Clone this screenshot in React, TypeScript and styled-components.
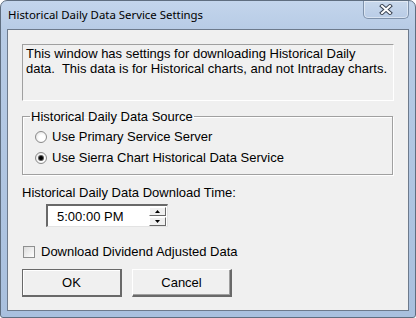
import React from 'react'
import styled, { createGlobalStyle } from 'styled-components'

const GlobalStyle = createGlobalStyle`
    html, body {
        margin: 0;
        padding: 0;
        background: #ffffff;
    }
`

export default function App() {
    return (
        <>
            <GlobalStyle />
            <Window>
                <TitleBar>
                    <Title>Historical Daily Data Service Settings</Title>
                    <CloseButton>
                        <svg width="14" height="11" viewBox="0 0 14 11">
                            <path d="M3 2 L11 9 M11 2 L3 9" stroke="#3c4656" strokeWidth="4" strokeLinecap="square" />
                            <path d="M3 2 L11 9 M11 2 L3 9" stroke="#ffffff" strokeWidth="2" strokeLinecap="square" />
                        </svg>
                    </CloseButton>
                </TitleBar>

                <Client>
                    <InfoBox>
                        This window has settings for downloading Historical Daily
                        data.&nbsp; This data is for Historical charts, and not Intraday charts.
                    </InfoBox>

                    <GroupBox>
                        <Legend>Historical Daily Data Source</Legend>
                        <RadioRow>
                            <Radio />
                            <span>Use Primary Service Server</span>
                        </RadioRow>
                        <RadioRow>
                            <Radio $checked />
                            <span>Use Sierra Chart Historical Data Service</span>
                        </RadioRow>
                    </GroupBox>

                    <FieldLabel>Historical Daily Data Download Time:</FieldLabel>
                    <TimeBox>
                        <TimeText>5:00:00 PM</TimeText>
                        <Spinner>
                            <SpinButton>
                                <svg width="5" height="3" viewBox="0 0 5 3"><path d="M2.5 0 L5 3 L0 3 Z" fill="#000" /></svg>
                            </SpinButton>
                            <SpinButton>
                                <svg width="5" height="3" viewBox="0 0 5 3"><path d="M0 0 L5 0 L2.5 3 Z" fill="#000" /></svg>
                            </SpinButton>
                        </Spinner>
                    </TimeBox>

                    <CheckRow>
                        <CheckBox />
                        <span>Download Dividend Adjusted Data</span>
                    </CheckRow>

                    <ButtonRow>
                        <DialogButton $default>OK</DialogButton>
                        <DialogButton>Cancel</DialogButton>
                    </ButtonRow>
                </Client>
            </Window>
        </>
    )
}

const Window = styled.div`
    width: 416px;
    height: 318px;
    box-sizing: border-box;
    display: flex;
    flex-direction: column;
    border: 1px solid #5f6e80;
    border-radius: 7px 7px 3px 3px;
    background: linear-gradient(180deg, #c3d5ec 0px, #b7cbe5 30px, #a9c0de 100%);
    overflow: hidden;
`
const TitleBar = styled.div`
    height: 28px;
    display: flex;
    align-items: flex-start;
    padding-left: 7px;
    padding-right: 6px;
    flex-shrink: 0;
`
const Title = styled.div`
    font-family: "Noto Sans", "Open Sans", sans-serif;
    font-size: 11.4px;
    line-height: 14px;
    color: #000;
    margin-top: 7px;
`
const CloseButton = styled.div`
    margin-left: auto;
    width: 46px;
    height: 18px;
    box-sizing: border-box;
    display: flex;
    align-items: center;
    justify-content: center;
    border: 1px solid #7f92ab;
    border-top: none;
    border-radius: 0 0 5px 5px;
    background: linear-gradient(180deg, #c8d8ec, #b9cce6);
    box-shadow: inset 0 0 0 1px rgba(255, 255, 255, 0.45);
`
const Client = styled.div`
    flex: 1;
    margin: 0 6px 6px 6px;
    border: 1px solid #6d7a8c;
    background: #f0f0f0;
    padding: 14px 14px 0 14px;
    display: flex;
    flex-direction: column;
    align-items: flex-start;
    font-family: "Liberation Sans", Arial, sans-serif;
    font-size: 13px;
    line-height: 15px;
    color: #000;
`
const InfoBox = styled.div`
    width: 372px;
    height: 57px;
    box-sizing: border-box;
    border-top: 1px solid #a0a0a0;
    border-left: 1px solid #a0a0a0;
    border-bottom: 1px solid #ffffff;
    border-right: 1px solid #ffffff;
    padding: 1px 3px;
`
const GroupBox = styled.fieldset`
    width: 371px;
    box-sizing: border-box;
    margin: 8px 0 0 0;
    padding: 0 0 9px 7px;
    border: 1px solid #a0a0a0;
    box-shadow: inset 1px 1px 0 #ffffff, 1px 1px 0 #ffffff;
    min-inline-size: 0;
`
const Legend = styled.legend`
    padding: 0 1px;
    margin-bottom: 5px;
`
const RadioRow = styled.div`
    display: flex;
    align-items: center;
    gap: 5px;
    height: 15px;
    margin-left: 5px;
    margin-bottom: 6px;

    &:last-child {
        margin-bottom: 0;
    }
`
const Radio = styled.span<{ $checked?: boolean }>`
    width: 12px;
    height: 12px;
    box-sizing: border-box;
    border-radius: 50%;
    border: 1px solid #8a8a8a;
    background: radial-gradient(circle at 60% 60%, #ffffff 35%, #d8d8d8 100%);
    display: flex;
    align-items: center;
    justify-content: center;

    &::after {
        content: '';
        display: ${p => (p.$checked ? 'block' : 'none')};
        width: 4px;
        height: 4px;
        border-radius: 50%;
        background: #000;
        box-shadow: 0 0 0 1px #555;
    }
`
const FieldLabel = styled.div`
    margin-top: 10px;
`
const TimeBox = styled.div`
    margin: 4px 0 0 24px;
    width: 122px;
    height: 23px;
    box-sizing: border-box;
    display: flex;
    align-items: center;
    background: #ffffff;
    border-top: 2px solid #696969;
    border-left: 2px solid #696969;
    border-bottom: 1px solid #e3e3e3;
    border-right: 1px solid #e3e3e3;
`
const TimeText = styled.span`
    padding-left: 9px;
    flex: 1;
`
const Spinner = styled.div`
    display: flex;
    flex-direction: column;
    gap: 1px;
    width: 17px;
    padding-right: 1px;
`
const SpinButton = styled.div`
    height: 9px;
    box-sizing: border-box;
    display: flex;
    align-items: center;
    justify-content: center;
    background: #f0f0f0;
    border-top: 1px solid #ffffff;
    border-left: 1px solid #ffffff;
    border-bottom: 1px solid #696969;
    border-right: 1px solid #696969;
`
const CheckRow = styled.div`
    display: flex;
    align-items: center;
    gap: 6px;
    margin-top: 17px;
    margin-left: 1px;
`
const CheckBox = styled.span`
    width: 12px;
    height: 12px;
    box-sizing: border-box;
    border: 1px solid #8e8f8f;
    background: linear-gradient(135deg, #dcdcdc, #ffffff);
`
const ButtonRow = styled.div`
    display: flex;
    gap: 10px;
    margin-top: 10px;
`
const DialogButton = styled.div<{ $default?: boolean }>`
    width: 100px;
    height: 28px;
    box-sizing: border-box;
    display: flex;
    align-items: center;
    justify-content: center;
    background: #f0f0f0;
    border-top: 1px solid ${p => (p.$default ? '#696969' : '#ffffff')};
    border-left: 1px solid ${p => (p.$default ? '#696969' : '#ffffff')};
    border-bottom: 2px solid #696969;
    border-right: 2px solid #696969;
    box-shadow: ${p => (p.$default ? 'inset 1px 1px 0 #ffffff' : 'inset -1px -1px 0 #a0a0a0')};
`
